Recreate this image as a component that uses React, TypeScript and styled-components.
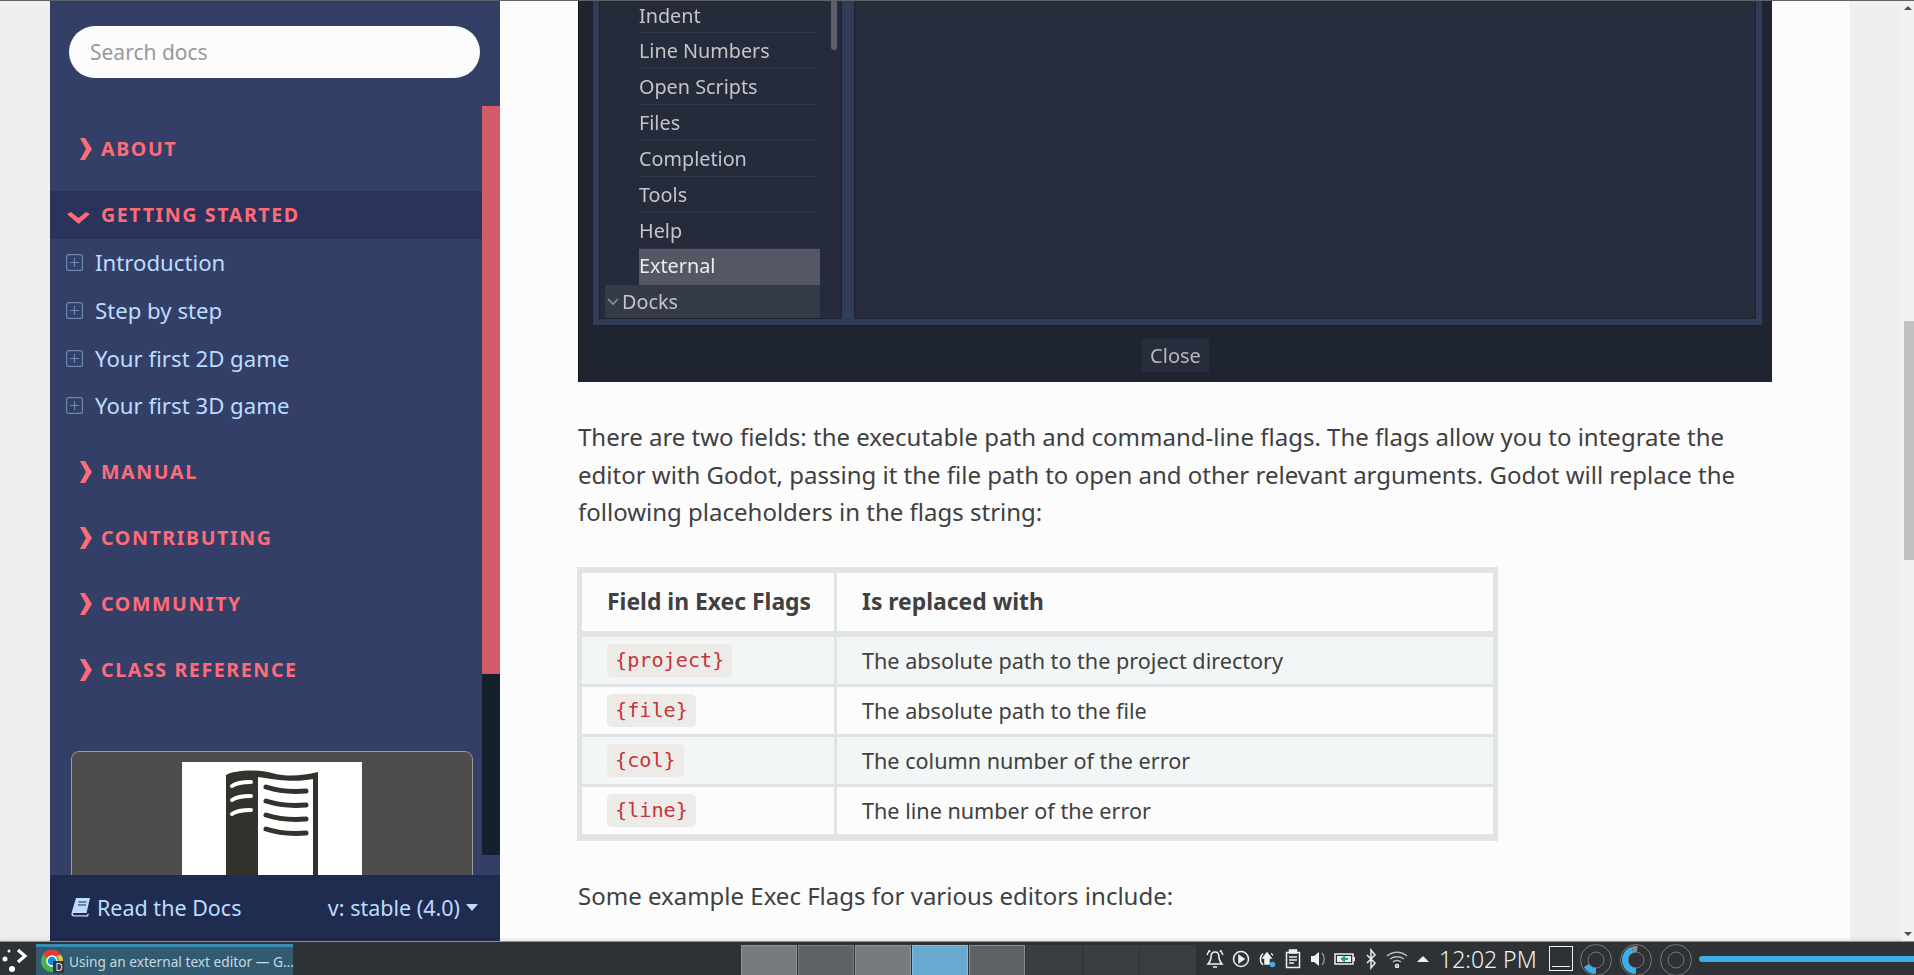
import styled, { createGlobalStyle } from 'styled-components';

const GlobalStyle = createGlobalStyle`
  html, body {
    margin: 0;
    padding: 0;
    height: 100%;
    overflow: hidden;
    background: #efefef;
    font-family: 'Noto Sans', 'Open Sans', sans-serif;
  }
`;

const Screen = styled.div`
  width: 1914px;
  height: 975px;
  display: flex;
  flex-direction: column;
  overflow: hidden;
`;

const Browser = styled.div`
  height: 941px;
  display: flex;
  border-top: 1px solid #5f6368;
  box-sizing: border-box;
  background: #efefef;
`;

const Gutter = styled.div`
  width: ${(p: { $w: number }) => p.$w}px;
  flex-shrink: 0;
`;

/* sidebar */
const Sidebar = styled.aside`
  width: 450px;
  flex-shrink: 0;
  display: flex;
  flex-direction: column;
  background: #333f67;
`;

const SideScroll = styled.div`
  position: relative;
  flex: 1;
  min-height: 0;
  overflow: hidden;
  padding-top: 25px;
`;

const SearchInput = styled.input`
  display: block;
  box-sizing: border-box;
  width: 411px;
  height: 52px;
  margin: 0 0 47px 19px;
  padding: 0 21px;
  border: none;
  border-radius: 26px;
  background: #fcfcfc;
  font-family: inherit;
  font-size: 21px;
  outline: none;
  &::placeholder {
    color: #999;
    opacity: 1;
  }
`;

const Section = styled.div<{ $open?: boolean }>`
  height: 48px;
  box-sizing: border-box;
  padding-bottom: 2px;
  margin-bottom: ${(p) => (p.$open ? 0 : 18)}px;
  display: flex;
  align-items: center;
  background: ${(p) => (p.$open ? '#29335c' : 'transparent')};
  color: #ff6b78;
  font-size: 19.6px;
  font-weight: 700;
  letter-spacing: 1.6px;
  text-transform: uppercase;
`;

const SectionArrow = styled.span<{ $down?: boolean }>`
  width: 51px;
  flex-shrink: 0;
  display: flex;
  justify-content: center;
  svg {
    display: block;
    margin-left: ${(p) => (p.$down ? 5 : 20)}px;
    margin-top: ${(p) => (p.$down ? 7 : 1)}px;
  }
`;

const NavItems = styled.ul`
  list-style: none;
  margin: 0 0 19px;
  padding: 0;
`;

const NavItem = styled.li`
  height: 47.7px;
  display: flex;
  align-items: center;
  gap: 12px;
  padding-left: 16px;
  color: #bcdcff;
  font-size: 22.2px;
  svg {
    display: block;
    flex-shrink: 0;
  }
`;

const AdBox = styled.div`
  box-sizing: border-box;
  width: 402px;
  height: 300px;
  margin: 56px 0 0 21px;
  padding-top: 10px;
  background: #4e4d4b;
  border: 1px solid #9a9a9a;
  border-radius: 8px 8px 0 0;
`;

const AdImage = styled.div`
  width: 180px;
  height: 180px;
  margin: 0 auto;
  background: #fff;
  svg {
    display: block;
  }
`;

const SideScrollTrack = styled.div`
  position: absolute;
  top: 105px;
  right: 0;
  width: 18px;
  height: 749px;
  background: #14202c;
`;

const SideScrollThumb = styled.div`
  height: 568px;
  background: #d35a68;
`;

const VersionBar = styled.div`
  height: 66px;
  flex-shrink: 0;
  box-sizing: border-box;
  display: flex;
  align-items: center;
  justify-content: space-between;
  padding: 0 22px 2px 21px;
  background: #202b50;
  color: #bcdcff;
  font-size: 21.5px;
`;

const VersionSide = styled.span`
  display: flex;
  align-items: center;
  gap: 6px;
  svg {
    display: block;
  }
`;

/* content */
const Content = styled.main`
  width: 1350px;
  flex-shrink: 0;
  box-sizing: border-box;
  padding-left: 78px;
  overflow: hidden;
  background: #fcfcfc;
  color: #404040;
`;

const Shot = styled.div`
  box-sizing: border-box;
  width: 1194px;
  height: 381px;
  display: flex;
  flex-direction: column;
  align-items: stretch;
  padding: 0 10px 0 14px;
  background: #1f2530;
  border-left: 1px solid #10131a;
  color: #c3c5c9;
  font-size: 19.8px;
  filter: blur(0.35px);
`;

const ShotFrame = styled.div`
  height: 324px;
  flex-shrink: 0;
  box-sizing: border-box;
  display: flex;
  gap: 12px;
  padding: 0 6px 6px;
  background: #323c58;
  box-shadow: 0 1px 0 #1a1e28;
`;

const TreePanel = styled.div`
  width: 243px;
  flex-shrink: 0;
  box-sizing: border-box;
  display: flex;
  overflow: hidden;
  background: #252b3a;
  border: 1px solid #1c212c;
  border-top: none;
  padding-left: 5px;
`;

const TreeList = styled.div`
  width: 215px;
  flex-shrink: 0;
  display: flex;
  flex-direction: column;
`;

const TreeRow = styled.div<{ $h: number; $lift: number; $active?: boolean }>`
  height: ${(p) => p.$h}px;
  flex-shrink: 0;
  box-sizing: border-box;
  margin-left: 34px;
  padding-bottom: ${(p) => p.$lift}px;
  display: flex;
  align-items: center;
  background: ${(p) => (p.$active ? '#555864' : 'transparent')};
  color: ${(p) => (p.$active ? '#eceded' : 'inherit')};
  border-bottom: ${(p) => (p.$active ? 'none' : '1px solid #2e3546')};
`;

const TreeGroup = styled.div`
  height: 36px;
  flex-shrink: 0;
  box-sizing: border-box;
  padding: 0 0 3px 2px;
  display: flex;
  align-items: center;
  gap: 3px;
  background: #353a48;
  svg {
    display: block;
  }
`;

const TreeBar = styled.div`
  width: 6px;
  height: 49px;
  margin-left: 11px;
  border-radius: 0 0 3px 3px;
  background: #5a5f6b;
`;

const DetailPanel = styled.div`
  flex: 1;
  background: #262c3c;
  border: 1px solid #1c212c;
  border-top: none;
`;

const ShotFooter = styled.div`
  display: flex;
  justify-content: center;
  padding-top: 14px;
  margin-right: 2px;
`;

const CloseButton = styled.div`
  width: 67px;
  height: 33px;
  margin-right: 2px;
  display: flex;
  align-items: center;
  justify-content: center;
  background: #272d3d;
  color: #b6b8bd;
  font-size: 20px;
`;

const Paragraph = styled.p`
  width: 1194px;
  margin: 36px 0 0;
  font-size: 24px;
  line-height: 37.6px;
`;

const ExecTable = styled.table`
  margin: 36px 0 0 -1px;
  padding: 3px 2px 4px;
  border-spacing: 3px;
  background: #e1e4e5;
  table-layout: fixed;
  width: 921px;
  font-size: 21.6px;
`;

const HeadCell = styled.th<{ $w: number }>`
  width: ${(p) => p.$w}px;
  height: 58px;
  box-sizing: content-box;
  padding: 0 0 0 25px;
  border-bottom: 3px solid #e1e4e5;
  background: #fcfcfc;
  text-align: left;
  font-weight: 700;
  font-size: 22.9px;
  color: #404040;
`;

const Row = styled.tr``;

const Cell = styled.td<{ $odd: boolean }>`
  height: 47px;
  padding: 0 0 0 25px;
  background: ${(p) => (p.$odd ? '#f3f6f6' : '#fcfcfc')};
  color: #404040;
`;

const CodePill = styled.code`
  display: inline-block;
  height: 33px;
  line-height: 33px;
  padding: 0 8px;
  border-radius: 5px;
  background: #ecebe8;
  color: #c7333a;
  font-family: 'DejaVu Sans Mono', 'Liberation Mono', monospace;
  font-size: 20.2px;
`;

const Scrollbar = styled.div`
  width: 13px;
  margin-left: 1px;
  flex-shrink: 0;
  display: flex;
  flex-direction: column;
  background: #f1f1f1;
  position: relative;
`;

const ScrollThumb = styled.div`
  width: 10px;
  height: 239px;
  margin: 320px 0 0 3px;
  background: #c1c1c1;
`;

const ScrollArrow = styled.span<{ $down?: boolean }>`
  position: absolute;
  left: 3px;
  ${(p) => (p.$down ? 'bottom: 5px;' : 'top: 5px;')}
  width: 0;
  height: 0;
  border-left: 4px solid transparent;
  border-right: 4px solid transparent;
  ${(p) => (p.$down ? 'border-top: 4px solid #505050;' : 'border-bottom: 4px solid #505050;')}
`;

/* taskbar */
const Taskbar = styled.footer`
  height: 34px;
  flex-shrink: 0;
  box-sizing: border-box;
  display: flex;
  align-items: stretch;
  background: #2e3235;
  border-top: 1px solid #8f9294;
  box-shadow: 0 -2px 3px rgba(0, 0, 0, 0.08);
  color: #eff0f1;
`;

const StartButton = styled.div`
  width: 36px;
  flex-shrink: 0;
  svg {
    display: block;
  }
`;

const TaskButton = styled.div`
  width: 257px;
  flex-shrink: 0;
  box-sizing: border-box;
  margin-top: 2px;
  display: flex;
  align-items: center;
  gap: 5px;
  padding-left: 5px;
  background: #325b70;
  border-top: 3px solid #3a8cb4;
  color: #c6d8e0;
  font-size: 13.7px;
  white-space: nowrap;
  svg {
    display: block;
    flex-shrink: 0;
  }
`;

const Pager = styled.div`
  margin: 3px 0 0 448px;
  display: flex;
  gap: 1px;
`;

const PagerCell = styled.div<{ $bg: string; $edge: string }>`
  width: 56px;
  box-sizing: border-box;
  background: ${(p) => p.$bg};
  border: 1px solid ${(p) => p.$edge};
  border-bottom: none;
`;

const Tray = styled.div`
  flex: 1;
  margin-left: 8px;
  display: flex;
  align-items: center;
  gap: 4px;
  svg {
    display: block;
    flex-shrink: 0;
  }
`;

const Clock = styled.div`
  margin-left: 1px;
  width: 100px;
  font-size: 23px;
  font-weight: 300;
  white-space: nowrap;
`;

const DesktopBox = styled.div`
  width: 24px;
  height: 25px;
  box-sizing: border-box;
  margin-left: 6px;
  display: flex;
  align-items: flex-end;
  padding: 0 2px 3px;
  border: 1px solid #eff0f1;
  &::after {
    content: '';
    flex: 1;
    height: 1px;
    background: #eff0f1;
  }
`;

const Gauges = styled.div`
  margin: 1px 0 0 2px;
  display: flex;
  gap: 6px;
  align-self: flex-start;
  svg {
    display: block;
  }
`;

const Meter = styled.div`
  flex: 1;
  height: 6px;
  margin-left: 2px;
  border-radius: 3px 0 0 3px;
  background: #3daee9;
`;

const ArrowRight = () => (
  <svg width="14" height="22" viewBox="0 0 14 22">
    <path d="M1 0h5l7 11-7 11H1l6-11z" fill="#ff6b78" />
  </svg>
);

const ArrowDown = () => (
  <svg width="23" height="14" viewBox="0 0 23 14">
    <path d="M0 3l4-2 7.500 6L19 1l4 2-11.500 10z" fill="#ff6b78" />
  </svg>
);

const PlusBox = () => (
  <svg width="17" height="17" viewBox="0 0 17 17" fill="none" stroke="#6c8ab0" strokeWidth="1.2">
    <rect x="0.6" y="0.6" width="15.800" height="15.800" rx="2" />
    <path d="M8.500 4v9M4 8.500h9" />
  </svg>
);

const BookIcon = () => (
  <svg width="20" height="20" viewBox="0 0 20 20">
    <path
      d="M5 1h14l-3.500 15H3c-1 0-1.300 1-1 1.500s.8.700 1.500.7H16l.5-1.500h1.500L17 19.500H3C1 19.500 0 18 .5 16z"
      fill="#bcdcff"
    />
    <path d="M7.500 5h8M7 8h8" stroke="#202b50" strokeWidth="1.200" />
  </svg>
);

const CaretDown = () => (
  <svg width="12" height="7" viewBox="0 0 12 7">
    <path d="M0 0h12L6 7z" fill="#bcdcff" />
  </svg>
);

const GuideBook = () => (
  <svg width="180" height="180" viewBox="0 0 180 180">
    <path
      d="M44 13C52 8 75 7 90 11c15 4 30 3 46-1v170h-5V17c-16 3-31 2-55-2v165H44z"
      fill="#33322c"
    />
    <g fill="none" stroke="#fff" strokeWidth="4" strokeLinecap="round">
      <path d="M50 24c4-3 12-4 19-4M50 38c4-3 12-4 19-4M50 52c4-3 12-4 19-4" />
    </g>
    <g fill="none" stroke="#33322c" strokeWidth="5" strokeLinecap="round">
      <path d="M84 25c12 4 27 5 40 4M84 39c12 4 27 5 40 4M84 53c12 4 27 5 40 4M84 67c12 4 27 5 40 4" />
    </g>
  </svg>
);

const StartIcon = () => (
  <svg width="36" height="33" viewBox="0 0 36 33">
    <circle cx="9" cy="9" r="1.500" fill="#fff" />
    <circle cx="5" cy="17" r="2.500" fill="#fff" />
    <circle cx="12" cy="27" r="3" fill="#fff" />
    <path d="M18 8l7 6-7 6" fill="none" stroke="#fff" strokeWidth="3.200" />
  </svg>
);

const ChromeIcon = () => (
  <svg width="23" height="23" viewBox="0 0 23 23">
    <circle cx="11" cy="11" r="11" fill="#4caf50" />
    <path d="M11 0a11 11 0 0 1 9.500 5.500H11a5.500 5.500 0 0 0-5 3L2 3.500A11 11 0 0 1 11 0z" fill="#e53935" />
    <path d="M20.500 5.500A11 11 0 0 1 11 22l5-8a5.500 5.500 0 0 0 0-8.500z" fill="#fbc02d" />
    <circle cx="11" cy="11" r="5" fill="#1e88e5" stroke="#fff" strokeWidth="1.500" />
    <rect x="12" y="11" width="11" height="12" fill="#33373a" />
    <text x="14.500" y="21" fontSize="10" fontFamily="Noto Sans, sans-serif" fill="#e5e5e5">
      D
    </text>
  </svg>
);

const TrayIcon = ({ children }: { children: React.ReactNode }) => (
  <svg width="22" height="22" viewBox="0 0 22 22" fill="none" stroke="#eff0f1" strokeWidth="1.500">
    {children}
  </svg>
);

const Gauge = ({ dash, grey = 0 }: { dash: number; grey?: number }) => (
  <svg width="34" height="33" viewBox="0 0 34 33">
    <circle cx="17" cy="17" r="15.500" fill="none" stroke="#74787a" />
    <circle cx="17" cy="17" r="8" fill="none" stroke="#74787a" />
    <circle
      cx="17"
      cy="17"
      r="11"
      fill="none"
      stroke="#3daee9"
      strokeWidth="6"
      strokeDasharray={`${dash} 100`}
      transform="rotate(90 17 17)"
    />
    <circle
      cx="17"
      cy="17"
      r="11"
      fill="none"
      stroke="#8a8d8f"
      strokeWidth="6"
      strokeDasharray={`${grey} 100`}
      strokeDashoffset={-dash}
      transform="rotate(90 17 17)"
    />
  </svg>
);

const closedTop = ['About'];
const closedBottom = ['Manual', 'Contributing', 'Community', 'Class reference'];
const navItems = ['Introduction', 'Step by step', 'Your first 2D game', 'Your first 3D game'];
const treeRows = ['Line Numbers', 'Open Scripts', 'Files', 'Completion', 'Tools', 'Help'];
const tableRows = [
  ['{project}', 'The absolute path to the project directory'],
  ['{file}', 'The absolute path to the file'],
  ['{col}', 'The column number of the error'],
  ['{line}', 'The line number of the error'],
];
const pagerCells = [
  ['#787b7d', '#8f9294'],
  ['#5f6265', '#7b7e80'],
  ['#787b7d', '#8f9294'],
  ['#67a9cf', '#7cc0e6'],
  ['#5f6265', '#8a8d8f'],
  ['#3a3e41', '#3a3e41'],
  ['#3a3e41', '#3a3e41'],
  ['#3a3e41', '#3a3e41'],
];

export default function App() {
  return (
    <Screen>
      <GlobalStyle />
      <Browser>
        <Gutter $w={50} />
        <Sidebar>
          <SideScroll>
            <SearchInput placeholder="Search docs" />
            {closedTop.map((s) => (
              <Section key={s}>
                <SectionArrow>
                  <ArrowRight />
                </SectionArrow>
                {s}
              </Section>
            ))}
            <Section $open>
              <SectionArrow $down>
                <ArrowDown />
              </SectionArrow>
              Getting started
            </Section>
            <NavItems>
              {navItems.map((n) => (
                <NavItem key={n}>
                  <PlusBox />
                  {n}
                </NavItem>
              ))}
            </NavItems>
            {closedBottom.map((s) => (
              <Section key={s}>
                <SectionArrow>
                  <ArrowRight />
                </SectionArrow>
                {s}
              </Section>
            ))}
            <AdBox>
              <AdImage>
                <GuideBook />
              </AdImage>
            </AdBox>
            <SideScrollTrack>
              <SideScrollThumb />
            </SideScrollTrack>
          </SideScroll>
          <VersionBar>
            <VersionSide>
              <BookIcon />
              Read the Docs
            </VersionSide>
            <VersionSide>
              v: stable (4.0)
              <CaretDown />
            </VersionSide>
          </VersionBar>
        </Sidebar>
        <Content>
          <Shot>
            <ShotFrame>
              <TreePanel>
                <TreeList>
                  <TreeRow $h={32} $lift={3}>
                    Indent
                  </TreeRow>
                  {treeRows.map((r) => (
                    <TreeRow key={r} $h={36} $lift={1}>
                      {r}
                    </TreeRow>
                  ))}
                  <TreeRow $h={36} $lift={3} $active>
                    External
                  </TreeRow>
                  <TreeGroup>
                    <svg width="12" height="8" viewBox="0 0 12 8" fill="none" stroke="#8d9097" strokeWidth="1.600">
                      <path d="M1 1l5 5 5-5" />
                    </svg>
                    Docks
                  </TreeGroup>
                </TreeList>
                <TreeBar />
              </TreePanel>
              <DetailPanel />
            </ShotFrame>
            <ShotFooter>
              <CloseButton>Close</CloseButton>
            </ShotFooter>
          </Shot>
          <Paragraph>
            There are two fields: the executable path and command-line flags. The flags allow you to integrate the
            editor with Godot, passing it the file path to open and other relevant arguments. Godot will replace the
            following placeholders in the flags string:
          </Paragraph>
          <ExecTable>
            <thead>
              <Row>
                <HeadCell $w={227}>Field in Exec Flags</HeadCell>
                <HeadCell $w={631}>Is replaced with</HeadCell>
              </Row>
            </thead>
            <tbody>
              {tableRows.map(([field, text], i) => (
                <Row key={field}>
                  <Cell $odd={i % 2 === 0}>
                    <CodePill>{field}</CodePill>
                  </Cell>
                  <Cell $odd={i % 2 === 0}>{text}</Cell>
                </Row>
              ))}
            </tbody>
          </ExecTable>
          <Paragraph>Some example Exec Flags for various editors include:</Paragraph>
        </Content>
        <Gutter $w={50} />
        <Scrollbar>
          <ScrollArrow />
          <ScrollThumb />
          <ScrollArrow $down />
        </Scrollbar>
      </Browser>
      <Taskbar>
        <StartButton>
          <StartIcon />
        </StartButton>
        <TaskButton>
          <ChromeIcon />
          Using an external text editor — G...
        </TaskButton>
        <Pager>
          {pagerCells.map(([bg, edge], i) => (
            <PagerCell key={i} $bg={bg} $edge={edge} />
          ))}
        </Pager>
        <Tray>
          <TrayIcon>
            <path d="M11 4c3 0 4 2 4 5 0 3 1 5 3 7H4c2-2 3-4 3-7 0-3 1-5 4-5zM9 19h4M3 7l2-4M19 7l-2-4M6 4L5 2M16 4l1-2" />
          </TrayIcon>
          <TrayIcon>
            <circle cx="11" cy="11" r="7.500" />
            <path d="M9 7.500l5 3.500-5 3.500z" fill="#eff0f1" />
          </TrayIcon>
          <TrayIcon>
            <path d="M7 5.500A7.500 7.500 0 0 0 7 17M15 5.500a7.500 7.500 0 0 1 2 2" />
            <path d="M11 5l4 5h-2v6H9v-6H7z" fill="#eff0f1" />
            <circle cx="16.500" cy="16.500" r="2.800" fill="#3daee9" stroke="none" />
          </TrayIcon>
          <TrayIcon>
            <rect x="4.500" y="4.500" width="13" height="15" />
            <rect x="7.500" y="2" width="7" height="3" fill="#eff0f1" />
            <path d="M7 9h8M7 12h8M7 15h5" />
          </TrayIcon>
          <TrayIcon>
            <path d="M3 8h3l5-4v14l-5-4H3z" fill="#eff0f1" stroke="none" />
            <path d="M14 5c3 3 3 9 0 12" stroke="#8f9294" />
          </TrayIcon>
          <TrayIcon>
            <rect x="1" y="6" width="18" height="10" stroke="#eff0f1" />
            <rect x="3" y="8" width="14" height="6" fill="#eff0f1" stroke="none" />
            <path d="M20 9v4" strokeWidth="2" />
            <path d="M8 11h6M11 8.500L8 11l3 2.500" stroke="#18a67c" strokeWidth="2" />
          </TrayIcon>
          <TrayIcon>
            <path d="M7 7l8 8-4 5V2l4 5-8 8" />
          </TrayIcon>
          <TrayIcon>
            <path d="M1 8c6-5 14-5 20 0M4 11c4-3 10-3 14 0M7 14c2-2 6-2 8 0" stroke="#b9bbbd" />
            <circle cx="11" cy="18" r="1.500" />
          </TrayIcon>
          <TrayIcon>
            <path d="M5 14l6-6 6 6z" fill="#eff0f1" stroke="none" />
          </TrayIcon>
          <Clock>12:02 PM</Clock>
          <DesktopBox />
          <Gauges>
            <Gauge dash={11.5} />
            <Gauge dash={30.7} grey={5} />
            <Gauge dash={0} />
          </Gauges>
          <Meter />
        </Tray>
      </Taskbar>
    </Screen>
  );
}
